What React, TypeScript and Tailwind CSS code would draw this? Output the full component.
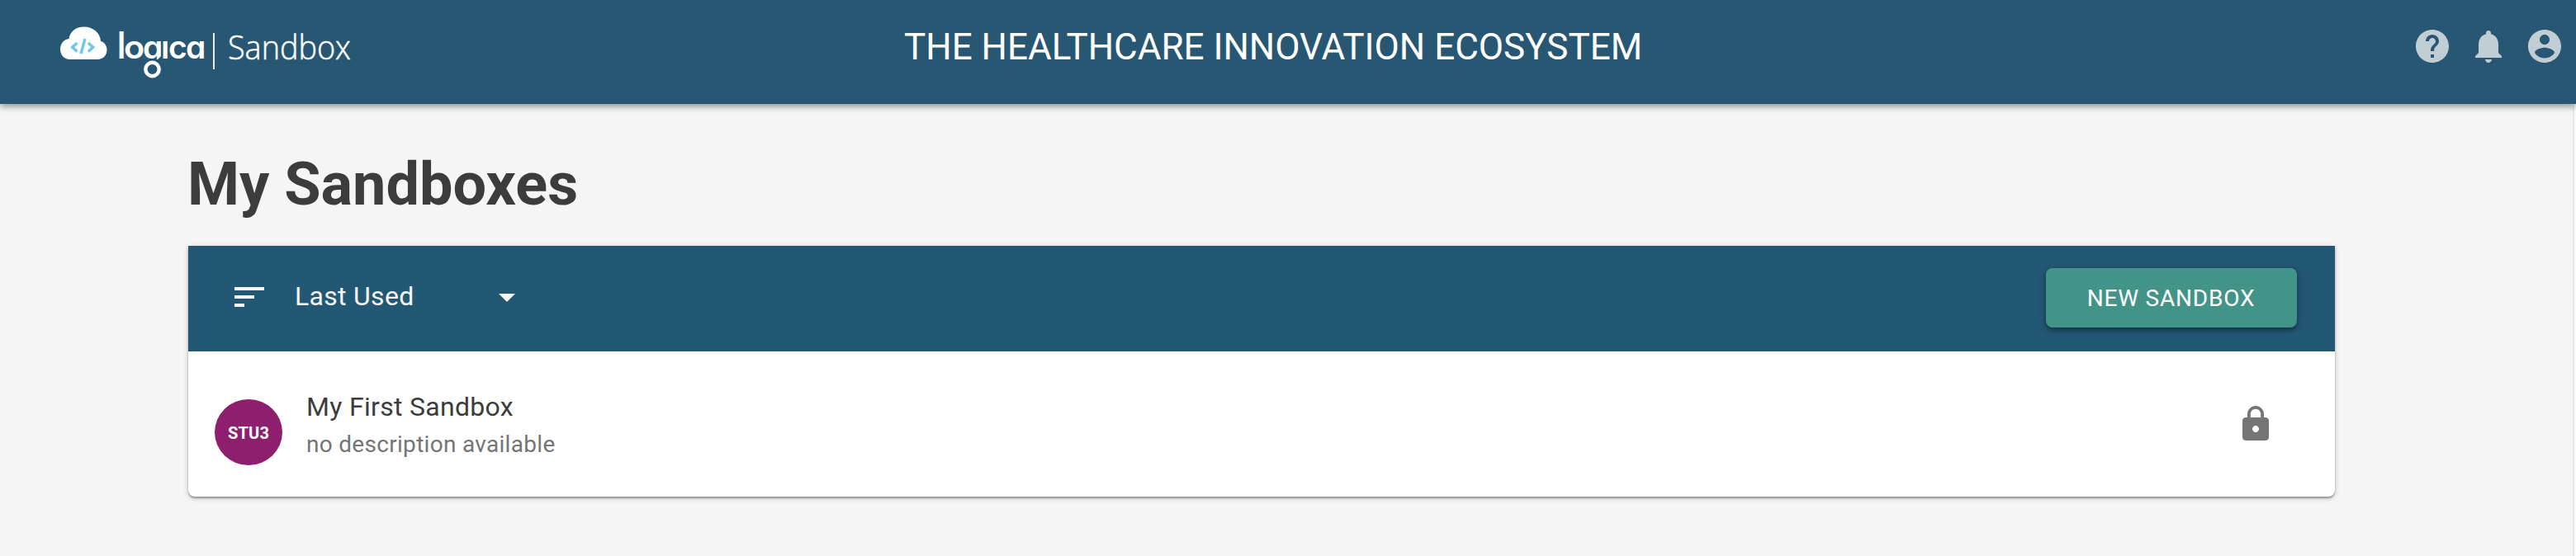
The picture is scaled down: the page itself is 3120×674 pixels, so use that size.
import React from "react";

function Icon({ d, className }: { d: string; className?: string }) {
  return (
    <svg viewBox="0 0 24 24" fill="currentColor" className={`block size-12 shrink-0 ${className ?? ""}`}>
      <path d={d} />
    </svg>
  );
}

const HELP = "M12 2C6.48 2 2 6.48 2 12s4.48 10 10 10 10-4.48 10-10S17.52 2 12 2zm1 17h-2v-2h2v2zm2.07-7.75l-.9.92C13.45 12.9 13 13.5 13 15h-2v-.5c0-1.1.45-2.1 1.17-2.83l1.24-1.26c.37-.36.59-.86.59-1.41 0-1.1-.9-2-2-2s-2 .9-2 2H8c0-2.21 1.79-4 4-4s4 1.79 4 4c0 .88-.36 1.68-.93 2.25z";
const BELL = "M12 22c1.1 0 2-.9 2-2h-4c0 1.1.89 2 2 2zm6-6v-5c0-3.07-1.64-5.64-4.5-6.32V4c0-.83-.67-1.5-1.5-1.5s-1.5.67-1.5 1.5v.68C7.63 5.36 6 7.92 6 11v5l-2 2v1h16v-1l-2-2z";
const ACCOUNT = "M12 2C6.48 2 2 6.48 2 12s4.48 10 10 10 10-4.48 10-10S17.52 2 12 2zm0 3c1.66 0 3 1.34 3 3s-1.34 3-3 3-3-1.34-3-3 1.34-3 3-3zm0 14.2c-2.5 0-4.71-1.28-6-3.22.03-1.99 4-3.08 6-3.08 1.99 0 5.97 1.09 6 3.08-1.29 1.94-3.5 3.22-6 3.22z";
const SORT = "M3 18h6v-2H3v2zM3 6v2h18V6H3zm0 7h12v-2H3v2z";
const DROP = "M7 10l5 5 5-5z";
const LOCK = "M18 8h-1V6c0-2.76-2.24-5-5-5S7 3.24 7 6v2H6c-1.1 0-2 .9-2 2v10c0 1.1.9 2 2 2h12c1.1 0 2-.9 2-2V10c0-1.1-.9-2-2-2zm-6 9c-1.1 0-2-.9-2-2s.9-2 2-2 2 .9 2 2-.9 2-2 2zm3.1-9H8.9V6c0-1.71 1.39-3.1 3.1-3.1 1.71 0 3.1 1.39 3.1 3.1v2z";

function Logo() {
  return (
    <div className="flex h-[90px] items-start text-white">
      <svg viewBox="0 0 58 42" className="mt-[31px] h-[42px] w-[58px] shrink-0">
        <path
          d="M13 41C5 41 1 35 1 28.500C1 22 5.500 16.500 11.500 16C12.500 7.500 20 1.500 29.500 1.500C41 1.500 49.500 9 50 19C54.500 20 57.500 24.500 57.500 29.500C57.500 36 53 41 46 41Z"
          fill="#fff"
        />
        <g fill="none" stroke="#71c5ef" strokeWidth="3.400">
          <path d="M21.500 21L15.600 26.300L21.500 31.600M34.800 21L40.700 26.300L34.800 31.600" />
          <path d="M31 16L26 34" />
        </g>
      </svg>
      <div className="relative ml-3 mt-[33px] flex h-12 w-[107px] shrink-0 font-['Inter',sans-serif] text-[39px] leading-[48px] font-semibold [font-feature-settings:'cv11']">
        <span className="w-2 origin-[50%_38px] scale-y-[1.15]">l</span>
        <span className="w-[23px] origin-left scale-x-[1.06]">o</span>
        <span className="w-[22px] [clip-path:polygon(0_0,22px_0,22px_35px,18px_39px,0_39px)]">g</span>
        <span className="w-[9px] [clip-path:inset(17px_0_0_0)]">i</span>
        <span className="w-[21px]">c</span>
        <span className="w-[23px]">a</span>
        <svg viewBox="0 0 22 22" className="absolute left-[31px] top-[40px] size-[22px]">
          <circle cx="11.500" cy="11" r="8.200" fill="none" stroke="#fff" strokeWidth="4.400" />
        </svg>
      </div>
      <div className="ml-[9px] mt-10 h-11 w-0.5 shrink-0 bg-white/90" />
      <div className="ml-4 mt-[29px] origin-left scale-x-[0.945] font-['Open_Sans',sans-serif] text-[40px] leading-[56px] font-light text-white [-webkit-text-stroke:0.5px_white]">Sandbox</div>
    </div>
  );
}

export default function App() {
  return (
    <div className="h-[674px] w-[3120px] overflow-hidden bg-[#f5f5f5] font-['Roboto',sans-serif] text-[#3c3c3c]">
      <header className="relative z-10 flex h-[126px] justify-between bg-[#285774] shadow-[0_3px_8px_rgba(0,0,0,0.42)]">
        <div className="w-[1095px] pl-[72px]"><Logo /></div>
        <h1 className="flex-1 pt-[31px] text-[44px] leading-[52px] whitespace-nowrap text-white">THE HEALTHCARE INNOVATION ECOSYSTEM</h1>
        <nav className="flex gap-5 pt-8 pr-3.5 text-[#c1cdd5]">
          <Icon d={HELP} />
          <Icon d={BELL} />
          <Icon d={ACCOUNT} />
        </nav>
      </header>
      <div className="flex h-[548px] justify-between">
        <main className="ml-[228px] w-[2600px]">
          <h2 className="-ml-px pt-14 text-[72px] leading-[84px] font-bold whitespace-nowrap">My Sandboxes</h2>
          <section className="mt-8 h-[304px] rounded-b-lg bg-white shadow-[0_2px_6px_rgba(0,0,0,0.2),0_2px_2px_rgba(0,0,0,0.3)]">
            <div className="flex h-32 justify-between bg-[#235875] pr-[46px] pl-[50px]">
              <div className="flex pt-[38px] text-[#f5f5f5]">
                <Icon d={SORT} />
                <span className="ml-[31px] w-[233px] text-[32px] leading-[46px] tracking-[0.3px] whitespace-nowrap">Last Used</span>
                <Icon d={DROP} />
              </div>
              <button className="mt-[27px] h-[72px] w-[304px] rounded-lg bg-[#439488] pt-px pr-px text-[28px] leading-[71px] tracking-[0.8px] whitespace-nowrap text-white shadow-[0_2px_10px_rgba(0,0,0,0.3),0_4px_4px_rgba(0,0,0,0.2)]">NEW SANDBOX</button>
            </div>
            <div className="flex h-44 pl-8">
              <div className="mt-[58px] flex h-20 w-[82px] items-center justify-center rounded-[50%] bg-[#8e1e6e] pt-px text-[20px] font-bold tracking-[0.2px] text-white">STU3</div>
              <div className="ml-[29px] flex-1 pt-[43px] whitespace-nowrap">
                <div className="text-[32px] leading-[48px] tracking-[0.3px]">My First Sandbox</div>
                <div className="pt-0.5 text-[28px] leading-[40px] tracking-[0.3px] text-[#757575]">no description available</div>
              </div>
              <Icon d={LOCK} className="mt-16 mr-[72px] text-[#757575]" />
            </div>
          </section>
        </main>
        <div className="w-1 border-l-2 border-[#e8e8e8] bg-[#fafafa]" />
      </div>
    </div>
  );
}
